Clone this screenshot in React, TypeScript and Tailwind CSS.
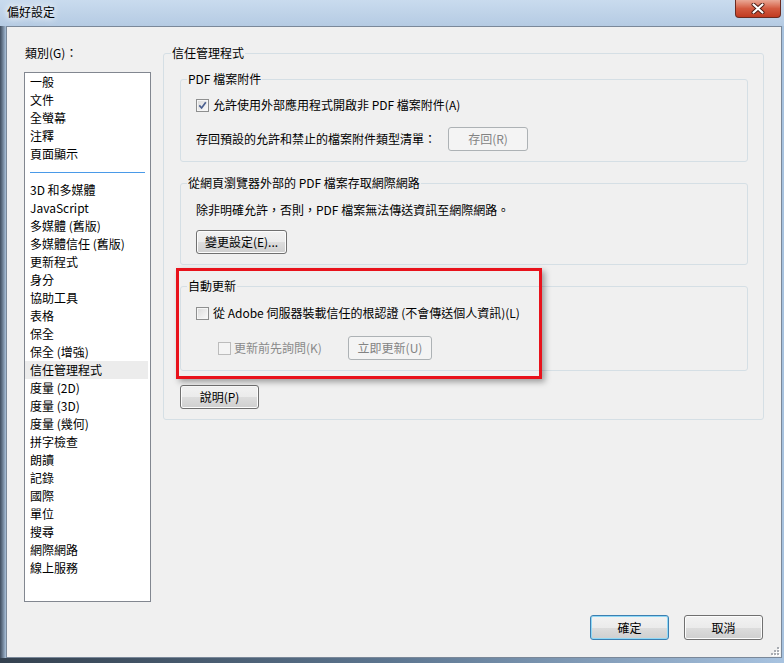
import React from 'react';

const topCategories = ['一般', '文件', '全螢幕', '注釋', '頁面顯示'];
const categories = [
  '3D 和多媒體',
  'JavaScript',
  '多媒體 (舊版)',
  '多媒體信任 (舊版)',
  '更新程式',
  '身分',
  '協助工具',
  '表格',
  '保全',
  '保全 (增強)',
  '信任管理程式',
  '度量 (2D)',
  '度量 (3D)',
  '度量 (幾何)',
  '拼字檢查',
  '朗讀',
  '記錄',
  '國際',
  '單位',
  '搜尋',
  '網際網路',
  '線上服務',
];

type BtnProps = {
  children: React.ReactNode;
  className?: string;
  disabled?: boolean;
  primary?: boolean;
};

function Btn({ children, className = '', disabled, primary }: BtnProps) {
  const look = disabled
    ? 'border-[#adb2b5] bg-[#f4f4f4] text-[#838383]'
    : primary
      ? 'border-[#3c7fb1] bg-[linear-gradient(#f2f2f2_0%,#ebebeb_50%,#dddddd_50%,#cfcfcf_100%)] shadow-[inset_0_0_0_1px_#8fd8f6]'
      : 'border-[#707070] bg-[linear-gradient(#f2f2f2_0%,#ebebeb_50%,#dddddd_50%,#cfcfcf_100%)] shadow-[inset_0_0_0_1px_#fcfcfc]';
  return (
    <div className={`flex shrink-0 items-center justify-center rounded-[3px] border ${look} ${className}`}>
      {children}
    </div>
  );
}

function Checkbox({ checked, disabled }: { checked?: boolean; disabled?: boolean }) {
  return (
    <span
      className={
        disabled
          ? 'flex h-[13px] w-[13px] shrink-0 items-center justify-center border border-[#bcbcbc] bg-[#f4f4f4]'
          : 'flex h-[13px] w-[13px] shrink-0 items-center justify-center border border-[#8e8f8f] bg-linear-to-br from-[#dadada] to-[#fbfbfb] shadow-[inset_0_0_0_1px_#f6f6f6]'
      }
    >
      {checked && (
        <svg width="9" height="9" viewBox="0 0 9 9">
          <path d="M1.3 4.4 L3.6 7 L7.8 1.3" fill="none" stroke="#4a5f8f" strokeWidth="1.7" />
        </svg>
      )}
    </span>
  );
}

// legend offset is measured from the fieldset's padding edge, so horizontal
// padding lives on the inner div instead
function Group({ title, className = '', children }: { title: string; className?: string; children: React.ReactNode }) {
  return (
    <fieldset className={`rounded-[3px] border border-[#d5dfe5] ${className}`}>
      <legend className="ml-[6px] px-[1px] leading-[16px]">{title}</legend>
      <div className="pl-[15px]">{children}</div>
    </fieldset>
  );
}

export default function App() {
  return (
    <div className="flex h-[663px] w-[784px] flex-col overflow-hidden bg-[#b7cce4] font-['Noto_Sans_CJK_TC',sans-serif] text-[12px] leading-[16px] text-black">
      {/* title bar */}
      <div className="flex h-[26px] items-start bg-linear-to-b from-[#c9dbee] to-[#b5cbe3]">
        <span className="ml-[7px] mt-[4px] [text-shadow:0_0_6px_#fff,0_0_10px_#fff]">偏好設定</span>
        <div className="ml-auto mr-[3px] flex h-[18px] w-[46px] items-center justify-center rounded-b-[4px] border border-t-0 border-[#6b2a20] bg-linear-to-b from-[#e9a896] via-[#d35a40] to-[#c03a20]">
          <svg width="14" height="11" viewBox="0 0 14 11">
            <path d="M2.5 1.5 L11.5 9.5 M11.5 1.5 L2.5 9.5" stroke="#4a1a12" strokeWidth="4" strokeLinecap="round" />
            <path d="M2.5 1.5 L11.5 9.5 M11.5 1.5 L2.5 9.5" stroke="#fff" strokeWidth="2.2" strokeLinecap="round" />
          </svg>
        </div>
      </div>

      <div className="flex flex-1">
        <div className="w-[6px] bg-linear-to-r from-[#3f4d5e] to-[#a9c0d9]" />

        {/* client area */}
        <div className="relative flex flex-1 flex-col border border-[#7a8899] bg-[#f0f0f0]">
          <div className="flex pl-[17px] pt-[18px]">
            {/* categories */}
            <div className="flex flex-col">
              <span className="pl-[1px]">類別(G)：</span>
              <div className="mt-[11px] h-[530px] w-[127px] border border-[#828790] bg-white">
                {topCategories.map((c) => (
                  <div key={c} className="h-[18px] pl-[5px] leading-[18px]">
                    {c}
                  </div>
                ))}
                <div className="flex h-[18px] items-center px-[5px]">
                  <div className="h-px flex-1 bg-[#4a9ae8]" />
                </div>
                {categories.map((c) => (
                  <div
                    key={c}
                    className={
                      c === '信任管理程式'
                        ? 'mr-[2px] h-[18px] bg-[#ececec] pl-[5px] leading-[18px]'
                        : 'h-[18px] pl-[5px] leading-[18px]'
                    }
                  >
                    {c}
                  </div>
                ))}
              </div>
            </div>

            {/* settings panel */}
            <fieldset className="ml-[12px] w-[601px] self-start rounded-[3px] border border-[#d5dfe5] pb-[10px] pt-[10px]">
              <legend className="ml-[7px] px-[1px] leading-[16px]">信任管理程式</legend>
              <div className="pl-[16px] pr-[15px]">
                <Group title="PDF 檔案附件" className="pb-[10px] pt-[10px]">
                  <div className="flex h-[16px] items-center">
                    <Checkbox checked />
                    <span className="ml-[4px]">允許使用外部應用程式開啟非 PDF 檔案附件(A)</span>
                  </div>
                  <div className="mt-[14px] flex h-[24px] items-center">
                    <span>存回預設的允許和禁止的檔案附件類型清單：</span>
                    <Btn disabled className="ml-[12px] h-[24px] w-[80px]">
                      存回(R)
                    </Btn>
                  </div>
                </Group>

                <Group title="從網頁瀏覽器外部的 PDF 檔案存取網際網路" className="mt-[13px] pb-[10px] pt-[11px]">
                  <div>除非明確允許，否則，PDF 檔案無法傳送資訊至網際網路。</div>
                  <Btn className="mt-[12px] h-[24px] w-[91px]">變更設定(E)...</Btn>
                </Group>

                <div className="relative mt-[13px]">
                  <Group title="自動更新" className="pb-[10px] pt-[11px]">
                    <div className="flex h-[16px] items-center">
                      <Checkbox />
                      <span className="ml-[4px]">從 Adobe 伺服器裝載信任的根認證 (不會傳送個人資訊)(L)</span>
                    </div>
                    <div className="mt-[15px] flex h-[24px] items-center pl-[22px]">
                      <div className="flex w-[130px] items-center">
                        <Checkbox disabled />
                        <span className="ml-[3px] text-[#8a8a8a]">更新前先詢問(K)</span>
                      </div>
                      <Btn disabled className="h-[24px] w-[84px]">
                        立即更新(U)
                      </Btn>
                    </div>
                  </Group>
                  {/* highlight annotation */}
                  <div className="absolute -left-[4px] -top-[10px] h-[111px] w-[366px] border-[3px] border-[#e8121b] shadow-[3px_3px_6px_rgba(0,0,0,0.35)]" />
                </div>

                <Btn className="mt-[14px] h-[24px] w-[79px]">說明(P)</Btn>
              </div>
            </fieldset>
          </div>

          <div className="mt-auto flex justify-end gap-[15px] pb-[17px] pr-[18px]">
            <Btn primary className="h-[25px] w-[79px]">
              確定
            </Btn>
            <Btn className="h-[25px] w-[79px]">取消</Btn>
          </div>

          <svg className="absolute bottom-[1px] right-[1px]" width="10" height="10" viewBox="0 0 10 10">
            {[
              [7, 1],
              [4, 4],
              [7, 4],
              [1, 7],
              [4, 7],
              [7, 7],
            ].map(([x, y]) => (
              <g key={`${x}-${y}`}>
                <rect x={x + 1} y={y + 1} width="2" height="2" fill="#fff" />
                <rect x={x} y={y} width="2" height="2" fill="#a8acb2" />
              </g>
            ))}
          </svg>
        </div>

        <div className="w-[2px] bg-[#a7c2de]" />
      </div>

      <div className="h-[5px] bg-linear-to-r from-[#34414f] via-[#5d7690] to-[#a8c3e0]" />
    </div>
  );
}
